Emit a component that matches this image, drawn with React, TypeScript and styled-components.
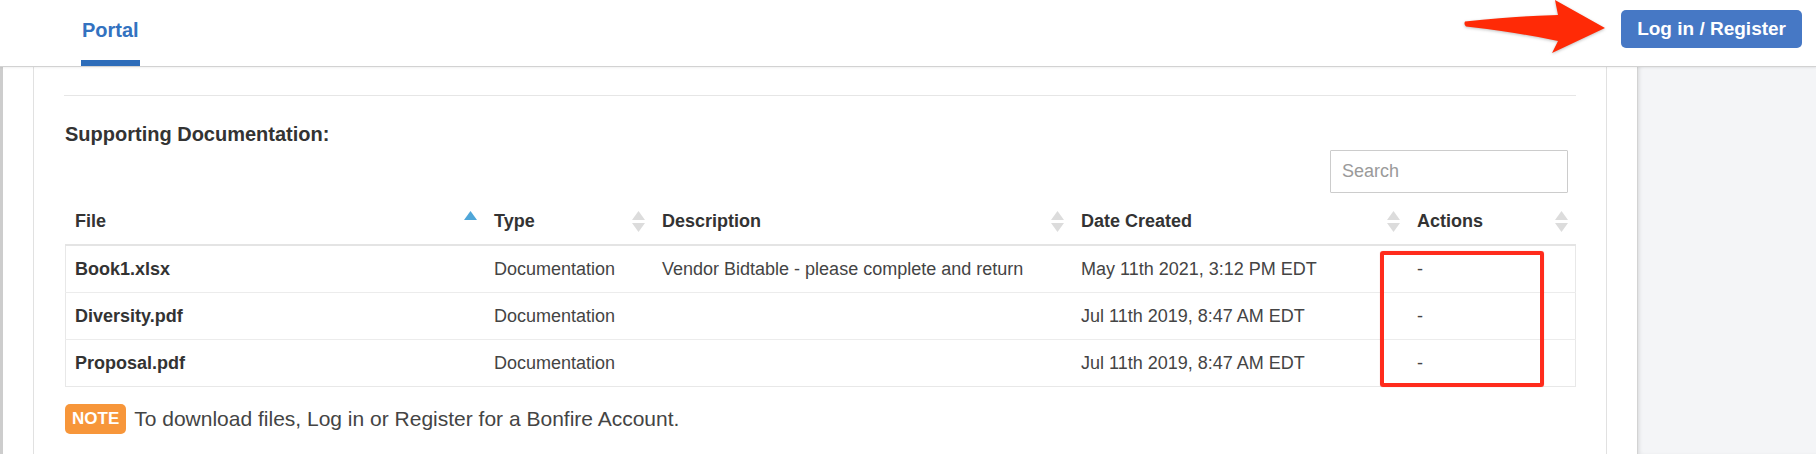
import React from "react";
import styled, { createGlobalStyle } from "styled-components";

const GlobalStyle = createGlobalStyle`
  html, body { margin: 0; padding: 0; background: #ffffff; }
  body {
    font-family: "Liberation Sans", Arial, Helvetica, sans-serif;
    color: #333333;
    -webkit-font-smoothing: antialiased;
  }
  * { box-sizing: border-box; }
`;

const Page = styled.div`
  position: relative;
  height: 454px;
  display: flex;
  flex-direction: column;
  overflow: hidden;
`;

const TopBar = styled.header`
  height: 67px;
  flex: none;
  display: flex;
  justify-content: space-between;
  align-items: flex-start;
  padding: 0 14px 0 81px;
  border-bottom: 1px solid #d2d2d2;
  box-shadow: 0 1px 2px rgba(0, 0, 0, 0.06);
  position: relative;
  z-index: 2;
  background: #ffffff;
`;

const Tab = styled.a<{ $active?: boolean }>`
  height: 66px;
  display: flex;
  align-items: center;
  padding: 0 1px;
  font-size: 20px;
  font-weight: 700;
  color: #3372c0;
  text-decoration: none;
  border-bottom: 6px solid ${(p) => (p.$active ? "#2d6cb9" : "transparent")};
`;

const LoginButton = styled.button`
  margin-top: 10px;
  height: 38px;
  padding: 0 16px;
  border: none;
  border-radius: 5px;
  background: #4678c5;
  color: #ffffff;
  font-family: "Liberation Sans", Arial, sans-serif;
  font-size: 19px;
  font-weight: 700;
  cursor: pointer;
`;

const Body = styled.div`
  flex: 1;
  display: flex;
  min-height: 0;
`;

const MainPane = styled.main`
  width: 1637px;
  flex: none;
  border-left: 3px solid #cdcdcd;
  padding: 0 30px;
  background: #ffffff;
`;

const Card = styled.section`
  height: 100%;
  border-left: 1px solid #e1e1e1;
  border-right: 1px solid #e1e1e1;
  padding: 28px 30px 0 31px;
`;

const Rule = styled.hr`
  margin: 0 0 26px -1px;
  border: none;
  border-top: 1px solid #e6e6e6;
`;

const SectionTitle = styled.h4`
  margin: 0;
  font-size: 20px;
  line-height: 24px;
  font-weight: 700;
  color: #333333;
`;

const SearchRow = styled.div`
  display: flex;
  justify-content: flex-end;
  padding-right: 8px;
  margin-top: 4px;
`;

const SearchInput = styled.input`
  width: 238px;
  height: 43px;
  border: 1px solid #cccccc;
  border-radius: 1px;
  padding: 0 11px;
  font-family: "Liberation Sans", Arial, sans-serif;
  font-size: 18px;
  color: #555555;
  outline: none;
  &::placeholder { color: #9a9a9a; }
`;

const columns = "419px 168px 419px 336px 168px";

const HeadRow = styled.div`
  margin-top: 5px;
  display: grid;
  grid-template-columns: ${columns};
  height: 48px;
  border-bottom: 2px solid #e4e4e4;
`;

const HeadCell = styled.div`
  display: flex;
  align-items: center;
  justify-content: space-between;
  padding: 0 7px 0 10px;
  font-size: 18px;
  font-weight: 700;
  color: #333333;
`;

const TableBody = styled.div`
  border: 1px solid #e8e8e8;
  border-top: none;
`;

const Row = styled.div`
  display: grid;
  grid-template-columns: ${columns};
  height: 47px;
  margin-left: -1px;
  margin-right: -1px;
  border-bottom: 1px solid #ececec;
  &:last-child { border-bottom: none; height: 46px; }
`;

const Cell = styled.div<{ $strong?: boolean }>`
  display: flex;
  align-items: center;
  padding-left: 10px;
  font-size: 18px;
  font-weight: ${(p) => (p.$strong ? 700 : 400)};
  color: ${(p) => (p.$strong ? "#333333" : "#444444")};
  white-space: nowrap;
`;

const NoteLine = styled.p`
  margin: 17px 0 0 0;
  display: flex;
  align-items: center;
  gap: 8px;
  font-size: 21px;
  color: #444444;
`;

const NoteBadge = styled.span`
  display: inline-flex;
  align-items: center;
  height: 30px;
  padding: 0 7px;
  border-radius: 5px;
  background: #f7963a;
  color: #ffffff;
  font-size: 17px;
  font-weight: 700;
`;

const Sidebar = styled.aside`
  flex: 1;
  background: #f4f5f7;
  border-left: 1px solid #d3d3d3;
  box-shadow: inset 3px 0 4px -2px rgba(0, 0, 0, 0.12);
`;

const ArrowMark = styled.svg`
  position: absolute;
  left: 1460px;
  top: 0;
  z-index: 5;
  overflow: visible;
  filter: drop-shadow(0 1px 1.5px rgba(0, 0, 0, 0.25));
`;

const HighlightBox = styled.div`
  position: absolute;
  left: 1380px;
  top: 251px;
  width: 164px;
  height: 136px;
  border: 4px solid #ff2b1c;
  border-radius: 3px;
  z-index: 5;
  box-shadow: 0 0 1px rgba(200, 0, 0, 0.4);
`;

type SortState = "none" | "asc";

const SortIcon: React.FC<{ state: SortState }> = ({ state }) => (
  <svg width="13" height="21" viewBox="0 0 13 21" aria-hidden="true">
    <polygon
      points="6.5,0 13,9 0,9"
      fill={state === "asc" ? "#4fa6d8" : "#dcdcdc"}
    />
    <polygon
      points="0,12 13,12 6.5,21"
      fill={state === "asc" ? "transparent" : "#dcdcdc"}
    />
  </svg>
);

const headers: { label: string; sort: SortState }[] = [
  { label: "File", sort: "asc" },
  { label: "Type", sort: "none" },
  { label: "Description", sort: "none" },
  { label: "Date Created", sort: "none" },
  { label: "Actions", sort: "none" },
];

const rows = [
  {
    file: "Book1.xlsx",
    type: "Documentation",
    description: "Vendor Bidtable - please complete and return",
    date: "May 11th 2021, 3:12 PM EDT",
  },
  {
    file: "Diversity.pdf",
    type: "Documentation",
    description: "",
    date: "Jul 11th 2019, 8:47 AM EDT",
  },
  {
    file: "Proposal.pdf",
    type: "Documentation",
    description: "",
    date: "Jul 11th 2019, 8:47 AM EDT",
  },
];

export default function App() {
  return (
    <Page>
      <GlobalStyle />
      <TopBar>
        <Tab $active href="#">Portal</Tab>
        <LoginButton>Log in / Register</LoginButton>
      </TopBar>
      <Body>
        <MainPane>
          <Card>
            <Rule />
            <SectionTitle>Supporting Documentation:</SectionTitle>
            <SearchRow>
              <SearchInput placeholder="Search" />
            </SearchRow>
            <HeadRow>
              {headers.map((h) => (
                <HeadCell key={h.label}>
                  <span>{h.label}</span>
                  <SortIcon state={h.sort} />
                </HeadCell>
              ))}
            </HeadRow>
            <TableBody>
              {rows.map((r) => (
                <Row key={r.file}>
                  <Cell $strong>{r.file}</Cell>
                  <Cell>{r.type}</Cell>
                  <Cell>{r.description}</Cell>
                  <Cell>{r.date}</Cell>
                  <Cell>-</Cell>
                </Row>
              ))}
            </TableBody>
            <NoteLine>
              <NoteBadge>NOTE</NoteBadge>
              To download files, Log in or Register for a Bonfire Account.
            </NoteLine>
          </Card>
        </MainPane>
        <Sidebar />
      </Body>
      <ArrowMark width="150" height="56" viewBox="0 0 150 56">
        <path
          d="M5,21.5 Q3.5,24 6,26.5 Q55,32 98,41 L92,53 L145,28 L95,0 L98,15 Q55,16 5,21.5 Z"
          fill="#ff2a06"
        />
      </ArrowMark>
      <HighlightBox />
    </Page>
  );
}
